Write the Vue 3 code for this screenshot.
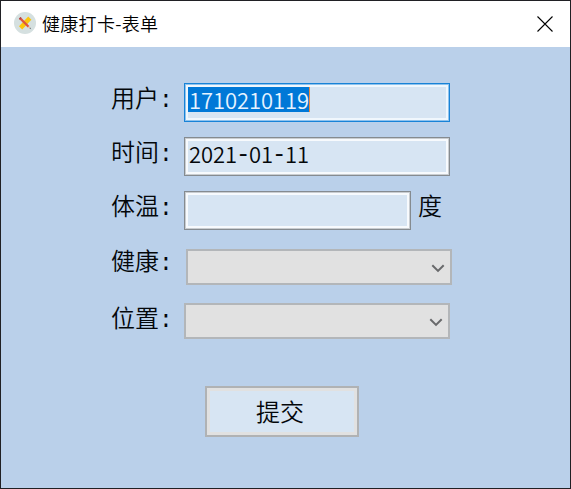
<script setup>
import { ref } from 'vue'

const user = ref('1710210119')
const date = ref('2021-01-11')
</script>

<template>
  <div class="window">
    <header class="titlebar">
      <svg class="app-icon" width="22" height="22" viewBox="0 0 22 22">
        <circle cx="11" cy="11" r="11" fill="#d5e0e0" />
        <path d="M14.2 4.6 L17.4 7.8 L8.2 17.4 L5 14.2 Z" fill="#fcc50b" />
        <path d="M4.9 6.7 L6.5 5.1 L15.4 14 L13.8 15.6 Z" fill="#dd5440" />
        <path d="M4.9 6.7 L6.5 5.1 L7.5 6.1 L5.9 7.7 Z" fill="#a9474b" />
        <path d="M13.8 15.6 L15.4 14 L17 17 Z" fill="#efc7a2" />
        <path d="M16.1 15.5 L17.2 17.2 L15.5 16.3 Z" fill="#35506b" />
      </svg>
      <h1 class="title">健康打卡-表单</h1>
      <svg class="close" width="16" height="16" viewBox="0 0 16 16">
        <path d="M.5 .5 L15.5 15.5 M15.5 .5 L.5 15.5" stroke="#000" stroke-width="1.1" />
      </svg>
    </header>

    <main class="form">
      <div class="row">
        <span class="label">用户<span class="colon">:</span></span>
        <div class="field focused">
          <span class="value selected"><span v-for="(c, i) in user" :key="i" class="cell">{{ c }}</span></span>
        </div>
      </div>
      <div class="row">
        <span class="label">时间<span class="colon">:</span></span>
        <div class="field">
          <span class="value"><span v-for="(c, i) in date" :key="i" class="cell" :class="{ dash: c === '-' }">{{ c }}</span></span>
        </div>
      </div>
      <div class="row">
        <span class="label">体温<span class="colon">:</span></span>
        <div class="field short"></div>
        <span class="unit">度</span>
      </div>
      <div class="row health">
        <span class="label">健康<span class="colon">:</span></span>
        <div class="select">
          <svg width="14" height="9" viewBox="0 0 14 9"><path d="M1.3 1.2 L7 6.9 L12.7 1.2" /></svg>
        </div>
      </div>
      <div class="row place">
        <span class="label">位置<span class="colon">:</span></span>
        <div class="select">
          <svg width="14" height="9" viewBox="0 0 14 9"><path d="M1.3 1.2 L7 6.9 L12.7 1.2" /></svg>
        </div>
      </div>
      <button class="submit" type="button">提交</button>
    </main>
  </div>
</template>

<style>
body {
  margin: 0;
}
</style>

<style scoped>
.window {
  box-sizing: border-box;
  height: 100vh;
  display: flex;
  flex-direction: column;
  border: 1px solid #202024;
  background: #bad0ea;
  color: #04070a;
  font-family: "Noto Sans CJK SC", sans-serif;
  overflow: hidden;
}
.titlebar {
  display: flex;
  align-items: center;
  height: 46px;
  flex: none;
  box-sizing: border-box;
  padding: 0 17px 0 13px;
  background: #fff;
}
.app-icon {
  margin-bottom: 2px;
}
.title {
  flex: 1;
  margin: 0 0 3px 6px;
  color: #000;
  font-size: 18px;
  font-weight: 350;
  line-height: 24px;
  letter-spacing: .3px;
}
.close {
  margin-bottom: 1px;
}
.form {
  padding: 36px 0 0 110px;
}
.row {
  display: flex;
  height: 39px;
  margin-bottom: 15px;
}
.label,
.unit {
  font-size: 24px;
  font-weight: 350;
  line-height: 28px;
}
.label {
  display: flex;
  width: 73px;
}
.colon {
  width: 12px;
  font: 23px/37px "Liberation Mono", monospace;
}
.unit {
  margin-left: 7px;
}
.field {
  box-sizing: border-box;
  width: 266px;
  height: 39px;
  padding: 2px 3px;
  border: 1px solid #858b90;
  background: #d7e5f3;
  box-shadow: inset 0 0 0 1px #c9cdd1, inset 0 0 0 3px #f7fafd;
}
.focused {
  border-color: #1883d7;
  box-shadow: inset 0 0 0 1px #8fc3ee, inset 0 0 0 3px #f0f7fd;
}
.short {
  width: 227px;
}
.value {
  display: inline-flex;
  height: 25px;
  margin-top: 1px;
  padding-left: 1px;
  font-size: 22px;
  font-weight: 350;
  line-height: 25px;
}
.selected {
  background: #0078d7;
  border-right: 1px solid #f08a3c;
  color: #e6f3ff;
}
.cell {
  width: 12px;
  text-align: center;
}
.dash {
  font: 24px/28px "Liberation Mono", monospace;
  text-indent: -1px;
}
.health {
  height: 36px;
  margin: 19px 0 18px;
}
.health .label {
  width: 75px;
  margin-top: -3px;
}
.place {
  height: 36px;
  margin-bottom: 47px;
}
.select {
  box-sizing: border-box;
  display: flex;
  align-items: center;
  justify-content: flex-end;
  width: 266px;
  height: 36px;
  padding-right: 5px;
  border: 2px solid #b3b6b9;
  background: #e1e1e1;
}
.select svg {
  margin-top: 2px;
}
.select path {
  fill: none;
  stroke: #68696b;
  stroke-width: 2;
}
.submit {
  display: block;
  box-sizing: border-box;
  width: 154px;
  height: 51px;
  margin-left: 94px;
  padding: 0 4px 2px 0;
  border: 2px solid #b0b2b4;
  background: #d7e5f3;
  box-shadow: inset 0 0 0 3px #e1e1e1;
  color: #04070a;
  font: 350 24px/44px "Noto Sans CJK SC", sans-serif;
}
</style>
